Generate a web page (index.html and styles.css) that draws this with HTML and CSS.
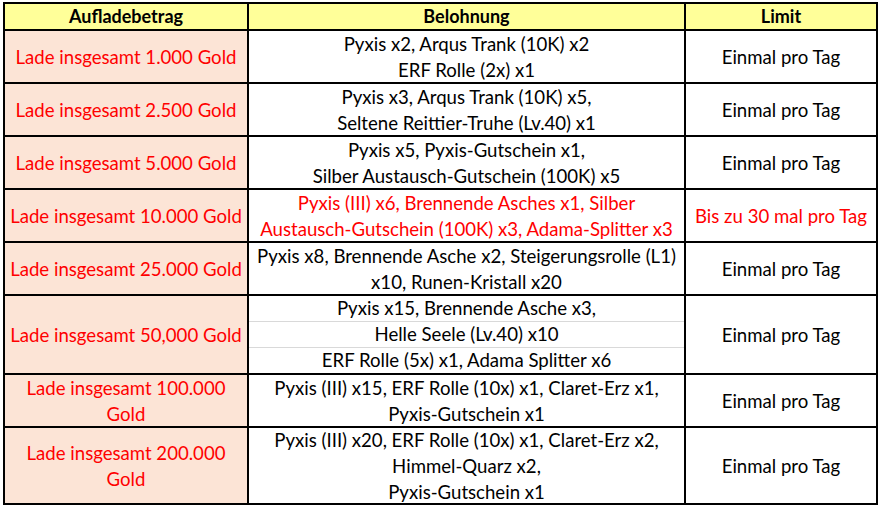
FILE: index.html
```html
<!DOCTYPE html>
<html lang="de">
<head>
<meta charset="utf-8">
<title>Aufladebetrag</title>
<link rel="stylesheet" href="styles.css">
</head>
<body>
<div class="sheet">
  <div class="grid">
    <div class="cell head">Aufladebetrag</div>
    <div class="cell head">Belohnung</div>
    <div class="cell head">Limit</div>

    <div class="cell amount">Lade insgesamt 1.000 Gold</div>
    <div class="cell">Pyxis x2, Arqus Trank (10K) x2<br>ERF Rolle (2x) x1</div>
    <div class="cell">Einmal pro Tag</div>

    <div class="cell amount">Lade insgesamt 2.500 Gold</div>
    <div class="cell">Pyxis x3, Arqus Trank (10K) x5,<br>Seltene Reittier-Truhe (Lv.40) x1</div>
    <div class="cell">Einmal pro Tag</div>

    <div class="cell amount">Lade insgesamt 5.000 Gold</div>
    <div class="cell">Pyxis x5, Pyxis-Gutschein x1,<br>Silber Austausch-Gutschein (100K) x5</div>
    <div class="cell">Einmal pro Tag</div>

    <div class="cell amount">Lade insgesamt 10.000 Gold</div>
    <div class="cell red">Pyxis (III) x6, Brennende Asches x1, Silber<br>Austausch-Gutschein (100K) x3, Adama-Splitter x3</div>
    <div class="cell red">Bis zu 30 mal pro Tag</div>

    <div class="cell amount">Lade insgesamt 25.000 Gold</div>
    <div class="cell">Pyxis x8, Brennende Asche x2, Steigerungsrolle (L1)<br>x10, Runen-Kristall x20</div>
    <div class="cell">Einmal pro Tag</div>

    <div class="cell amount">Lade insgesamt 50,000 Gold</div>
    <div class="split">
      <div class="sub">Pyxis x15, Brennende Asche x3,</div>
      <div class="sub">Helle Seele (Lv.40) x10</div>
      <div class="sub">ERF Rolle (5x) x1, Adama Splitter x6</div>
    </div>
    <div class="cell">Einmal pro Tag</div>

    <div class="cell amount">Lade insgesamt 100.000<br>Gold</div>
    <div class="cell">Pyxis (III) x15, ERF Rolle (10x) x1, Claret-Erz x1,<br>Pyxis-Gutschein x1</div>
    <div class="cell">Einmal pro Tag</div>

    <div class="cell amount">Lade insgesamt 200.000<br>Gold</div>
    <div class="cell">Pyxis (III) x20, ERF Rolle (10x) x1, Claret-Erz x2,<br>Himmel-Quarz x2,<br>Pyxis-Gutschein x1</div>
    <div class="cell">Einmal pro Tag</div>
  </div>
</div>
</body>
</html>
```
FILE: styles.css
```css
html, body {
  margin: 0;
  padding: 0;
  background: #ffffff;
}
body {
  font-family: Lato, "Open Sans", "Liberation Sans", sans-serif;
  font-size: 18.6px;
  color: #000000;
}
.sheet {
  padding: 2px 0 0 3px;
}
.grid {
  display: grid;
  grid-template-columns: 242px 435px 190px;
  grid-template-rows: 25px 51px 51px 51px 51px 51px 77px 51px 75px;
  gap: 2px;
  padding: 2px;
  background: #000000;
  width: max-content;
}
.cell {
  background: #ffffff;
  display: flex;
  align-items: center;
  justify-content: center;
  text-align: center;
  line-height: 26px;
  white-space: nowrap;
}
.head {
  background: #ffff99;
  font-weight: 700;
  font-size: 18px;
  line-height: 25px;
}
.amount {
  background: #fce4d6;
  color: #ff0000;
}
.red {
  color: #ff0000;
}
.split {
  display: grid;
  grid-template-columns: 1fr;
  grid-template-rows: 25px 25px 25px;
  gap: 1px;
  background: #d9d9d9;
}
.sub {
  background: #ffffff;
  display: flex;
  align-items: center;
  justify-content: center;
  line-height: 25px;
  white-space: nowrap;
}
```
